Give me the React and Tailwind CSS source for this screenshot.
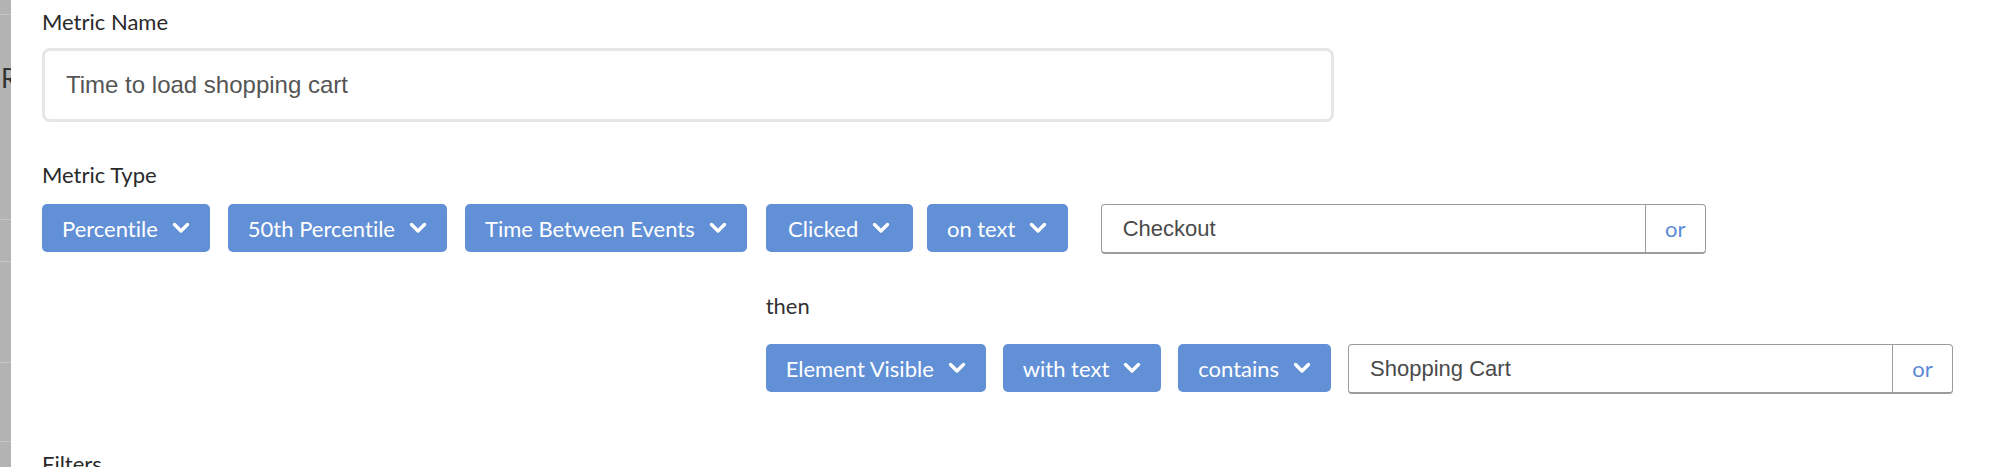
import React from "react";

const Chevron = () => (
  <svg width="18" height="12" viewBox="0 0 18 12" fill="none" className="shrink-0">
    <path d="M2.5 2.5 L9 9 L15.5 2.5" stroke="white" strokeWidth="3.4" strokeLinecap="round" strokeLinejoin="round" />
  </svg>
);

function Pill({ label, className = "" }) {
  return (
    <button
      className={`flex h-[48px] items-center justify-center gap-[14px] rounded-[5px] bg-[#6190d6] px-[20px] text-[22px] text-white font-['Lato',sans-serif] [font-variant-ligatures:none] ${className}`}
    >
      <span>{label}</span>
      <Chevron />
    </button>
  );
}

function OrInput({ value }) {
  return (
    <div className="flex h-[50px] w-[605px] rounded-[4px] border border-[#9c9c9c] border-b-2 bg-white">
      <div className="flex flex-1 items-center pl-[21px] text-[22px] text-[#4a4a4a] font-['Liberation_Sans',sans-serif]">
        {value}
      </div>
      <div className="flex w-[60px] items-center justify-center border-l border-[#9c9c9c] text-[22px] text-[#5b8ad6] font-['Lato',sans-serif]">
        or
      </div>
    </div>
  );
}

export default function App() {
  return (
    <div className="flex h-[467px] w-full overflow-hidden bg-white font-['Lato',sans-serif] [font-variant-ligatures:none]">
      {/* sidebar edge */}
      <div className="relative flex w-[11px] shrink-0 flex-col overflow-hidden bg-[#b3b3b3]">
        <div className="h-[15px] border-b border-[#c6c6c6]" />
        <div className="h-[205px] border-b border-[#c6c6c6]" />
        <div className="h-[42px] border-b border-[#c6c6c6]" />
        <div className="h-[101px] border-b border-[#c6c6c6]" />
        <div className="h-[79px] border-b border-[#c6c6c6]" />
        <span className="absolute left-[1px] top-[62px] text-[26px] leading-[32px] text-[#333]">R</span>
      </div>

      <div className="flex-1 pl-[31px] pt-[8px]">
        <div className="text-[22px] leading-[28px] text-[#2a2a2a]">Metric Name</div>
        <div className="mt-[12px] flex h-[74px] w-[1292px] items-center rounded-[8px] border-[3px] border-[#e6e6e6] pl-[21px] text-[24px] text-[#555] font-['Liberation_Sans',sans-serif]">
          Time to load shopping cart
        </div>

        <div className="mt-[39px] text-[22px] leading-[28px] text-[#2a2a2a]">Metric Type</div>
        <div className="mt-[15px] flex items-start">
          <div className="flex gap-[18px] pr-[19px]">
            <Pill label="Percentile" />
            <Pill label="50th Percentile" />
            <Pill label="Time Between Events" />
          </div>
          <div className="flex flex-col">
            <div className="flex items-start">
              <div className="flex gap-[14px]">
                <Pill label="Clicked" className="w-[147px]" />
                <Pill label="on text" className="w-[141px]" />
              </div>
              <div className="ml-[33px]">
                <OrInput value="Checkout" />
              </div>
            </div>
            <div className="mt-[38px] text-[22px] leading-[28px] text-[#333]">then</div>
            <div className="mt-[24px] flex items-start gap-[17px]">
              <Pill label="Element Visible" />
              <Pill label="with text" />
              <Pill label="contains" />
              <OrInput value="Shopping Cart" />
            </div>
          </div>
        </div>

        <div className="mt-[56px] text-[22px] leading-[28px] text-[#2a2a2a]">Filters</div>
      </div>
    </div>
  );
}
